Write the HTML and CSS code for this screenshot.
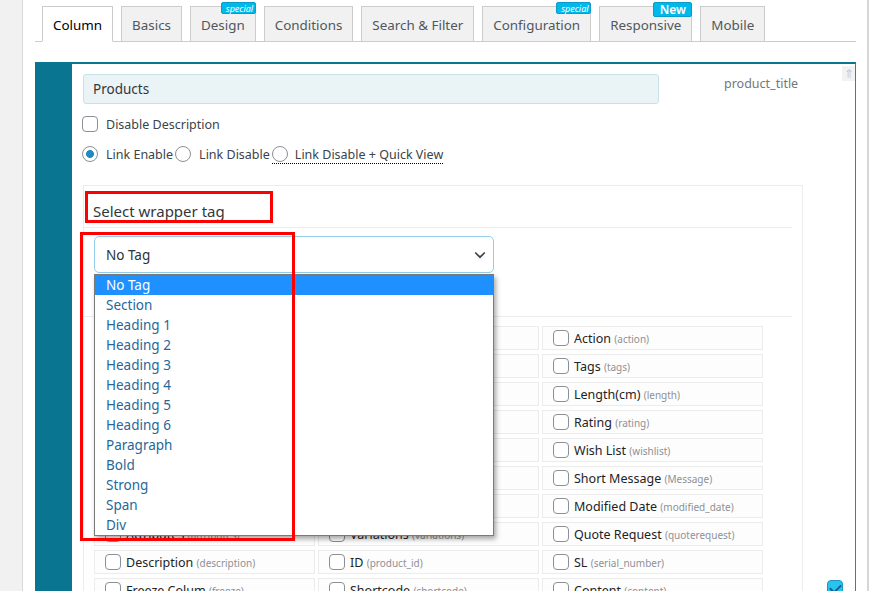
FILE: index.html
```html
<!DOCTYPE html>
<html lang="en">
<head>
<meta charset="utf-8">
<title>Column settings</title>
<link rel="stylesheet" href="styles.css">
</head>
<body>
<div class="screen">
  <div class="wp-side"></div>
  <div class="main">
    <nav class="tabs">
      <a class="tab active">Column</a>
      <a class="tab">Basics</a>
      <a class="tab">Design<span class="badge special">special</span></a>
      <a class="tab">Conditions</a>
      <a class="tab">Search &amp; Filter</a>
      <a class="tab">Configuration<span class="badge special">special</span></a>
      <a class="tab">Responsive<span class="badge new">New</span></a>
      <a class="tab">Mobile</a>
    </nav>

    <section class="panel">
      <span class="to-top">&#8657;</span>
      <div class="title-row">
        <div class="title-input">Products</div>
        <span class="keyword">product_title</span>
      </div>

      <label class="check-line"><input type="checkbox" class="cb"><span>Disable Description</span></label>

      <div class="radio-line">
        <label class="opt"><input type="radio" name="lk" class="rd" checked><span>Link Enable</span></label>
        <label class="opt"><input type="radio" name="lk" class="rd"><span>Link Disable</span></label>
        <label class="opt dotted"><input type="radio" name="lk" class="rd"><span>Link Disable + Quick View</span></label>
      </div>

      <div class="content-row">
        <div class="tag-box">
          <h4 class="tag-head">Select wrapper tag</h4>
          <div class="select-area">
            <div class="select">
              <span>No Tag</span>
              <svg class="chev" width="12" height="8" viewBox="0 0 12 8"><path d="M1.2 1.5 6 6.2l4.8-4.7" fill="none" stroke="#3c434a" stroke-width="1.7"/></svg>
            </div>
            <ul class="dropdown">
              <li class="hl">No Tag</li>
              <li>Section</li>
              <li>Heading 1</li>
              <li>Heading 2</li>
              <li>Heading 3</li>
              <li>Heading 4</li>
              <li>Heading 5</li>
              <li>Heading 6</li>
              <li>Paragraph</li>
              <li>Bold</li>
              <li>Strong</li>
              <li>Span</li>
              <li>Div</li>
            </ul>
          </div>
          <div class="sep"></div>
          <div class="grid">
            <label class="cell"><input type="checkbox" class="cb"><span>Thumbnails <small>(thumbnails)</small></span></label>
            <label class="cell"><input type="checkbox" class="cb"><span>Products <small>(product_title)</small></span></label>
            <label class="cell"><input type="checkbox" class="cb"><span>Action <small>(action)</small></span></label>

            <label class="cell"><input type="checkbox" class="cb"><span>Category <small>(category)</small></span></label>
            <label class="cell"><input type="checkbox" class="cb"><span>Price <small>(price)</small></span></label>
            <label class="cell"><input type="checkbox" class="cb"><span>Tags <small>(tags)</small></span></label>

            <label class="cell"><input type="checkbox" class="cb"><span>Quantity <small>(quantity)</small></span></label>
            <label class="cell"><input type="checkbox" class="cb"><span>Stock <small>(stock)</small></span></label>
            <label class="cell"><input type="checkbox" class="cb"><span>Length(cm) <small>(length)</small></span></label>

            <label class="cell"><input type="checkbox" class="cb"><span>Total Price <small>(total)</small></span></label>
            <label class="cell"><input type="checkbox" class="cb"><span>SKU <small>(sku)</small></span></label>
            <label class="cell"><input type="checkbox" class="cb"><span>Rating <small>(rating)</small></span></label>

            <label class="cell"><input type="checkbox" class="cb"><span>Weight(kg) <small>(weight)</small></span></label>
            <label class="cell"><input type="checkbox" class="cb"><span>Width(cm) <small>(width)</small></span></label>
            <label class="cell"><input type="checkbox" class="cb"><span>Wish List <small>(wishlist)</small></span></label>

            <label class="cell"><input type="checkbox" class="cb"><span>Height(cm) <small>(height)</small></span></label>
            <label class="cell"><input type="checkbox" class="cb"><span>Quick View <small>(quick)</small></span></label>
            <label class="cell"><input type="checkbox" class="cb"><span>Short Message <small>(Message)</small></span></label>

            <label class="cell"><input type="checkbox" class="cb"><span>Buy Now <small>(buy)</small></span></label>
            <label class="cell"><input type="checkbox" class="cb"><span>Check <small>(check)</small></span></label>
            <label class="cell"><input type="checkbox" class="cb"><span>Modified Date <small>(modified_date)</small></span></label>

            <label class="cell"><input type="checkbox" class="cb"><span>Attributes <small>(attributes)</small></span></label>
            <label class="cell"><input type="checkbox" class="cb"><span>Variations <small>(variations)</small></span></label>
            <label class="cell"><input type="checkbox" class="cb"><span>Quote Request <small>(quoterequest)</small></span></label>

            <label class="cell"><input type="checkbox" class="cb"><span>Description <small>(description)</small></span></label>
            <label class="cell"><input type="checkbox" class="cb"><span>ID <small>(product_id)</small></span></label>
            <label class="cell"><input type="checkbox" class="cb"><span>SL <small>(serial_number)</small></span></label>

            <label class="cell"><input type="checkbox" class="cb"><span>Freeze Colum <small>(freeze)</small></span></label>
            <label class="cell"><input type="checkbox" class="cb"><span>Shortcode <small>(shortcode)</small></span></label>
            <label class="cell"><input type="checkbox" class="cb"><span>Content <small>(content)</small></span></label>
          </div>
          <span class="mark mark-head"></span>
          <span class="mark mark-list"></span>
        </div>
        <div class="side">
          <input type="checkbox" class="cb on" checked>
        </div>
      </div>
    </section>
  </div>
</div>
</body>
</html>
```
FILE: styles.css
```css
* { box-sizing: border-box; margin: 0; padding: 0; }
html, body { height: 100%; }
body {
  font-family: "Noto Sans", "Open Sans", sans-serif;
  font-size: 12.5px;
  color: #1d2327;
  background: #f1f1f1;
  overflow: hidden;
}
.screen { display: flex; height: 591px; overflow: hidden; }
.wp-side { flex: none; width: 23px; background: #f1f1f1; border-right: 1px solid #d9d9d9; }
.main {
  flex: 1;
  background: #fff;
  padding: 6px 11px 0 12px;
  border-right: 2px solid #d6d6d6;
  overflow: hidden;
}

/* tabs */
.tabs {
  display: flex;
  align-items: flex-start;
  gap: 8px;
  height: 36px;
  padding-left: 7px;
  border-bottom: 1px solid #cccccc;
}
.tab {
  position: relative;
  height: 36px;
  padding: 2px 10px 0;
  display: flex;
  align-items: center;
  border: 1px solid #cccccc;
  background: #f1f1f1;
  color: #50575e;
  font-size: 13.4px;
  white-space: nowrap;
}
.tab.active { background: #fff; border-bottom-color: #fff; color: #000; }
.badge {
  position: absolute;
  right: -1px;
  top: -5px;
  color: #fff;
  background: #00b9eb;
  border: 1px solid #0a9ccb;
  border-radius: 2px;
  line-height: 1;
}
.badge.special {
  font-size: 9px;
  font-style: italic;
  padding: 1px 4px;
  height: 12px;
  width: 35px;
  text-align: center;
}
.badge.new {
  font-size: 12px;
  font-weight: 600;
  height: 15px;
  width: 39px;
  text-align: center;
  padding-top: 1px;
}

/* panel */
.panel {
  position: relative;
  margin-top: 20px;
  height: 620px;
  border-top: 2px solid #0a7590;
  border-left: 37px solid #0a7590;
  border-right: 1px solid #5f737d;
  padding: 10px 0 0 11px;
}
.to-top {
  position: absolute;
  right: 0;
  top: 2px;
  width: 13px;
  height: 15px;
  background: #f2f2f2;
  color: #c8c8c8;
  font-size: 12px;
  line-height: 15px;
  text-align: center;
}
.title-row { display: flex; align-items: flex-start; }
.title-input {
  width: 576px;
  height: 30px;
  background: #eaf3f6;
  border: 1px solid #c9e1e9;
  border-radius: 3px;
  padding: 0 9px;
  font-size: 13.5px;
  line-height: 28px;
  color: #32373c;
}
.keyword { margin-left: 65px; color: #72777c; font-size: 12.5px; line-height: 20px; }

.cb, .rd {
  appearance: none;
  -webkit-appearance: none;
  flex: none;
  width: 16px;
  height: 16px;
  border: 1px solid #8c8f94;
  background: #fff;
  margin: 0;
}
.cb { border-radius: 4px; }
.rd { border-radius: 50%; }
.rd:checked { background: radial-gradient(circle, #1e8cbe 0 3.6px, #fff 4.2px); }
.cb.on {
  background: #29c3ef;
  border-color: #1a98c2;
  position: relative;
}
.cb.on::after {
  content: "";
  position: absolute;
  left: 4px;
  top: 1px;
  width: 5px;
  height: 9px;
  border: solid #1b5f8a;
  border-width: 0 2px 2px 0;
  transform: rotate(45deg);
}

.check-line {
  display: flex;
  align-items: center;
  gap: 8px;
  height: 20px;
  margin-top: 10px;
  margin-left: -1px;
  color: #3c434a;
}
.radio-line {
  display: flex;
  align-items: center;
  gap: 2px;
  height: 20px;
  margin-top: 10px;
  margin-left: -1px;
  color: #3c434a;
}
.opt { display: flex; align-items: center; gap: 8px; height: 20px; }
.opt.dotted { border-bottom: 1px dotted #000; height: 19px; margin-top: 1px; gap: 7px; }

/* content */
.content-row { display: flex; align-items: flex-start; margin-top: 21px; }
.tag-box {
  position: relative;
  width: 720px;
  height: 460px;
  border: 1px solid #ececec;
}
.tag-head {
  margin-right: 10px;
  padding: 15px 0 6px 9px;
  border-bottom: 1px solid #ececec;
  font-size: 15px;
  font-weight: 400;
  line-height: 20px;
  color: #32373c;
}
.select-area { position: relative; margin: 8px 0 0 10px; width: 400px; }
.select {
  height: 37px;
  display: flex;
  align-items: center;
  justify-content: space-between;
  padding: 0 7px 0 11px;
  border: 1px solid #95cce8;
  border-radius: 5px;
  font-size: 13.5px;
  color: #2c3338;
}
.dropdown {
  position: absolute;
  left: 0;
  top: 38px;
  width: 400px;
  list-style: none;
  background: #fff;
  border: 1px solid #7a7a7a;
  box-shadow: 2px 3px 5px rgba(0, 0, 0, .35);
  z-index: 2;
}
.dropdown li {
  height: 20px;
  line-height: 20px;
  padding-left: 11px;
  font-size: 13.5px;
  color: #27679a;
}
.dropdown li.hl { background: #1e90ff; color: #fff; }

.sep { margin: 43px 10px 0 0; border-top: 1px solid #ececec; }
.grid {
  display: grid;
  grid-template-columns: repeat(3, 221px);
  grid-auto-rows: 24px;
  gap: 4px 3px;
  margin: 9px 0 0 10px;
}
.cell {
  display: flex;
  align-items: center;
  gap: 5px;
  padding-left: 10px;
  border: 1px solid #ececec;
  background: #fdfdfd;
  font-size: 12.5px;
  color: #1d2327;
  white-space: nowrap;
  overflow: hidden;
}
.cell small { font-size: 10px; color: #8d9196; }

.mark { position: absolute; border: 3px solid #ff0000; z-index: 3; }
.mark-head { left: 1px; top: 5px; width: 188px; height: 32px; }
.mark-list { left: -4px; top: 46px; width: 215px; height: 309px; }

.side { margin-left: 24px; padding-top: 395px; }
```
